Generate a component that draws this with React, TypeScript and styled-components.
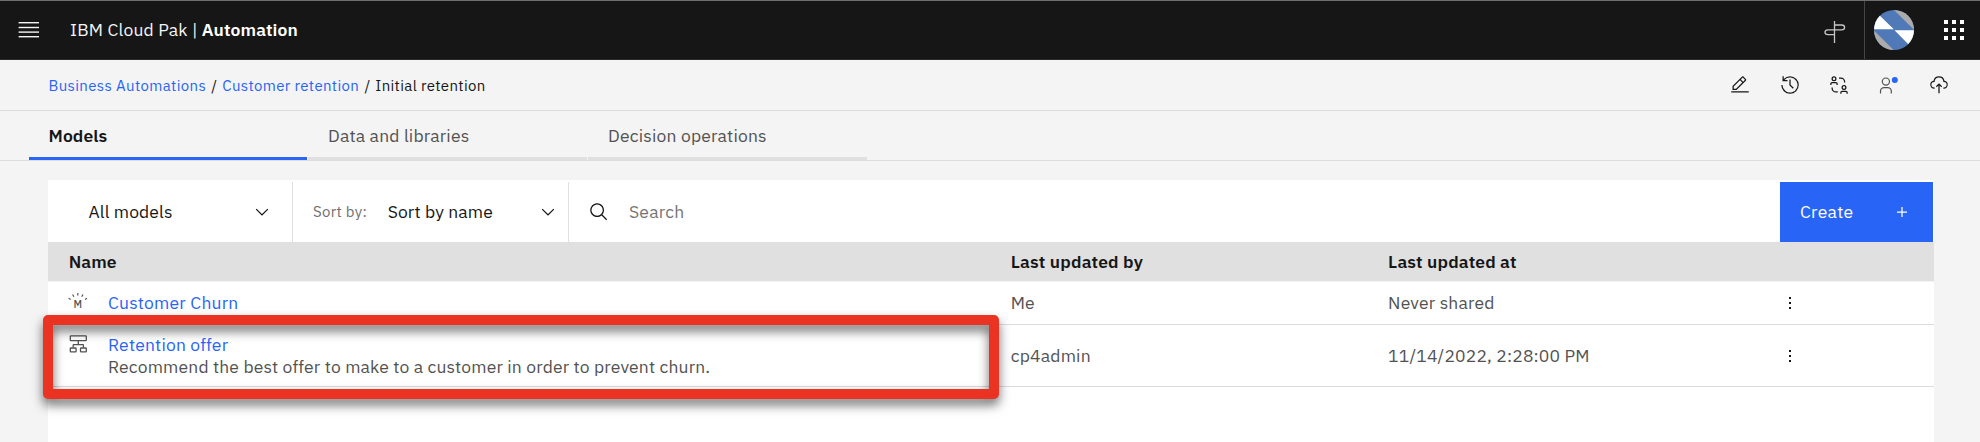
import React from "react";
import styled, { createGlobalStyle } from "styled-components";

const blue = "#2864f5";
const ink = "#161616";
const muted = "#525252";
const line = "#dcdcdc";

const GlobalStyle = createGlobalStyle`
  * { box-sizing: border-box; }
  body {
    margin: 0;
    background: #f4f4f4;
    color: ${ink};
    font-family: "IBM Plex Sans", Roboto, "Liberation Sans", sans-serif;
    font-size: 17.5px;
    line-height: 22.5px;
  }
  svg { display: block; flex: none; }
`;

const Page = styled.div`
  position: relative;
  display: flex;
  flex-direction: column;
  width: 100%;
  height: 442px;
  overflow: hidden;
`;

const Label = styled.span<{ $track?: number }>`
  white-space: pre;
  letter-spacing: ${(p) => p.$track ?? 0.18}px;
`;

const Header = styled.header`
  flex: none;
  display: flex;
  align-items: center;
  height: 60px;
  padding-left: 18px;
  background: #161616;
  border-top: 1px solid #6c6f6e;
  border-bottom: 1px solid #2b2b2b;
  color: #f4f4f4;
`;

const Brand = styled.div`
  display: flex;
  gap: 4px;
  margin-left: 30px;
  padding-top: 1px;
  strong { font-weight: 600; color: #fff; }
`;

const HeaderTools = styled.div`
  display: flex;
  align-items: center;
  height: 100%;
  margin-left: auto;
`;

const Guide = styled.div`
  display: flex;
  align-items: center;
  height: 100%;
  padding: 3px 18.5px 0 0;
  border-right: 1px solid #454545;
`;

const Avatar = styled.div`
  margin: 0 30px 0 9px;
`;

const Switcher = styled.div`
  display: grid;
  grid-template-columns: repeat(3, 4px);
  grid-auto-rows: 4px;
  gap: 4px;
  margin-right: 16px;
  i { background: #fff; }
`;

const CrumbBar = styled.div`
  flex: none;
  display: flex;
  align-items: center;
  justify-content: space-between;
  height: 51px;
  padding: 0 31px 0 48.5px;
  border-bottom: 1px solid ${line};
`;

const Crumbs = styled.nav`
  display: flex;
  gap: 5.2px;
  padding-top: 2.5px;
  font-size: 15px;
`;

const Link = styled.a<{ $track?: number }>`
  color: ${blue};
  white-space: pre;
  letter-spacing: ${(p) => p.$track ?? 0.2}px;
`;

const Actions = styled.div`
  display: flex;
  align-items: center;
  gap: 29.8px;
`;

const TabBar = styled.div`
  flex: none;
  display: flex;
  gap: 1px;
  height: 50px;
  padding-left: 29px;
  border-bottom: 1px solid ${line};
`;

const Tab = styled.div<{ $active?: boolean }>`
  display: flex;
  align-items: center;
  width: ${(p) => (p.$active ? 278 : 279)}px;
  padding: 4px 0 0 ${(p) => (p.$active ? 19.5 : 20)}px;
  border-bottom: 3px solid ${(p) => (p.$active ? blue : "#e0e0e0")};
  color: ${(p) => (p.$active ? ink : muted)};
  font-weight: ${(p) => (p.$active ? 600 : 400)};
`;

const Panel = styled.main`
  flex: 1;
  width: 1886px;
  margin: 19px 0 0 48px;
  background: #fff;
`;

const Toolbar = styled.div`
  display: flex;
  height: 62px;
  padding-top: 2px;
`;

const Dropdown = styled.div<{ $width: number; $indent: number; $end: number }>`
  display: flex;
  align-items: center;
  width: ${(p) => p.$width}px;
  padding: 0 ${(p) => p.$end}px 0 ${(p) => p.$indent}px;
  border-right: 1px solid #e0e0e0;
  > svg { margin-left: auto; }
`;

const Prefix = styled.span`
  margin-right: 20.5px;
  color: #6f6f6f;
  font-size: 15px;
  letter-spacing: 0.27px;
`;

const SearchBox = styled.div`
  flex: 1;
  display: flex;
  align-items: center;
  gap: 20px;
  padding-left: 20px;
  color: #757575;
`;

const CreateButton = styled.button`
  display: flex;
  align-items: center;
  justify-content: space-between;
  width: 153px;
  height: 60px;
  margin-right: 1px;
  padding: 0 21.5px 0 20px;
  border: 0;
  background: ${blue};
  color: #fff;
  font: inherit;
`;

const Columns = styled.div`
  display: grid;
  grid-template-columns: 942px 377.400px 380.600px 1fr;
`;

const TableHead = styled(Columns)`
  align-items: center;
  height: 40px;
  background: #e0e0e0;
  border-bottom: 1px solid #f4f4f4;
  font-weight: 600;
`;

const TableRow = styled(Columns)<{ $height: number }>`
  height: ${(p) => p.$height}px;
  border-bottom: 1px solid ${line};
  color: ${muted};
`;

const Cell = styled.div`
  display: flex;
  align-items: center;
  padding: 1px 0 0 20.7px;
`;

const NameCell = styled.div<{ $top: number; $iconTop: number }>`
  display: flex;
  gap: 20px;
  padding: ${(p) => p.$top}px 0 0 20px;
  > svg { margin-top: ${(p) => p.$iconTop}px; }
`;

const NameText = styled.div`
  display: flex;
  flex-direction: column;
`;

const MenuCell = styled.div`
  display: flex;
  align-items: center;
  padding-left: 41px;
`;

const Kebab = styled.div`
  display: grid;
  gap: 3px;
  width: 2px;
  i { height: 2px; background: ${ink}; }
`;

const Highlight = styled.div`
  position: absolute;
  left: 43px;
  top: 315px;
  width: 956px;
  height: 84px;
  border: 10px solid #ea3323;
  border-radius: 5px;
  filter: drop-shadow(0 6px 5.5px rgba(0, 0, 0, 0.57));
`;

function Glyph({ d, size = 20, box = 32, color = ink }: { d: string; size?: number; box?: number; color?: string }) {
  return (
    <svg width={size} height={size} viewBox={`0 0 ${box} ${box}`} fill={color}>
      <path d={d} />
    </svg>
  );
}

const icons = {
  edit: "M2 26H30V28H2zM25.4 9c.8-.8.8-2 0-2.8l-3.6-3.6c-.8-.8-2-.8-2.8 0l-15 15V24h6.4L25.4 9zM20.4 4L24 7.6l-3 3L17.4 7 20.4 4zM6 22v-3.6l10-10 3.6 3.6-10 10H6z",
  recent:
    "M20.59 22L15 16.41V7h2v8.58l5 5.01L20.59 22zM16,2A13.94,13.94,0,0,0,6,6.23V2H4v8h8V8H7.08A12,12,0,1,1,4,16H2A14,14,0,1,0,16,2Z",
  collaborate:
    "M6 21V20H4v1a7 7 0 007 7h3V26H11A5 5 0 016 21zM24 11v1h2V11a7 7 0 00-7-7H16V6h3A5 5 0 0124 11zM11 11H5a3 3 0 00-3 3v2H4V14a1 1 0 011-1h6a1 1 0 011 1v2h2V14A3 3 0 0011 11zM8 10A4 4 0 104 6 4 4 0 008 10zM8 4A2 2 0 116 6 2 2 0 018 4zM27 25H21a3 3 0 00-3 3v2h2V28a1 1 0 011-1h6a1 1 0 011 1v2h2V28A3 3 0 0027 25zM20 20a4 4 0 104-4A4 4 0 0020 20zm6 0a2 2 0 11-2-2A2 2 0 0126 20z",
  upload:
    "M11 18L12.41 19.41 15 16.83 15 29 17 29 17 16.83 19.59 19.41 21 18 16 13 11 18zM23.5,22H23V20h.5a4.5,4.5,0,0,0,.36-9L23,11l-.1-.82a7,7,0,0,0-13.88,0L9,11,8.14,11a4.5,4.5,0,0,0,.36,9H9v2H8.5A6.5,6.5,0,0,1,7.2,9.14a9,9,0,0,1,17.6,0A6.5,6.5,0,0,1,23.5,22Z",
  search:
    "M29,27.5859l-7.5521-7.5521a11.0177,11.0177,0,1,0-1.4141,1.4141L27.5859,29ZM4,13a9,9,0,1,1,9,9A9.01,9.01,0,0,1,4,13Z",
  chevron: "M8 11L3 6 3.7 5.3 8 9.6 12.3 5.3 13 6z",
  plus: "M17 15L17 8 15 8 15 15 8 15 8 17 15 17 15 24 17 24 17 17 24 17 24 15z",
};

const MenuIcon = () => (
  <svg width="22" height="20" viewBox="0 0 22 20" fill="#f4f4f4">
    <rect x="0.6" y="2" width="20.4" height="1.4" />
    <rect x="0.6" y="6.8" width="20.4" height="1.4" />
    <rect x="0.6" y="11.4" width="20.4" height="1.4" />
    <rect x="0.6" y="16" width="20.4" height="1.4" />
  </svg>
);

const GuideIcon = () => (
  <svg width="22" height="24" viewBox="0 0 22 24" fill="none" stroke="#c6c6c6" strokeWidth="1.3">
    <path d="M10.500 1v22M10.500 5h7.200c1.600 0 2.900 1.100 2.900 2.400s-1.300 2.400-2.900 2.400H3.900C2.300 9.800 1 10.900 1 12.200s1.300 2.400 2.900 2.400h6.600" />
  </svg>
);

const AvatarIcon = () => (
  <svg width="40" height="40" viewBox="0 0 40 40">
    <clipPath id="avatar-disc">
      <circle cx="20" cy="20" r="20" />
    </clipPath>
    <g clipPath="url(#avatar-disc)">
      <rect width="40" height="40" fill="#5079b7" />
      <path d="M0 0L19.800 19.300H0zM20.500 20.200H40V40z" fill="#fff" />
      <path d="M20 0H40V19.800zM0 20.400L19.500 40H0z" fill="#ababab" />
    </g>
  </svg>
);

const UserIcon = () => (
  <svg width="20" height="20" viewBox="0 0 20 20">
    <path
      transform="translate(-2.700 0) scale(0.600)"
      d="M16 6a5 5 0 11-5 5 5 5 0 015-5m0-2a7 7 0 107 7A7 7 0 0016 4zM26 31H24V27a5 5 0 00-5-5H13a5 5 0 00-5 5v4H6V27a7 7 0 017-7h6a7 7 0 017 7z"
      fill="#525252"
    />
    <circle cx="15.800" cy="5" r="3" fill={blue} />
  </svg>
);

const PredictiveIcon = () => (
  <svg width="20" height="20" viewBox="0 0 20 20">
    <path
      d="M9.800 1v2.600M4.600 2.500l1.300 2.200M15 2.500l-1.300 2.200M0.600 6.200l2 1.200M19 6.200l-2 1.200"
      stroke={muted}
      strokeWidth="1.200"
      fill="none"
    />
    <text x="9.800" y="15.500" textAnchor="middle" fontSize="10.500" fontWeight="500" fill={muted}>
      M
    </text>
  </svg>
);

const DecisionIcon = () => (
  <svg width="20" height="20" viewBox="0 0 20 20" fill="none" stroke={muted} strokeWidth="1.300">
    <rect x="2.300" y="1.800" width="16" height="4.800" rx="0.600" />
    <path d="M10.300 6.600v4M5.200 13.500v-2.400q0-.5.5-.5h9.200q.5 0 .5.500v2.400" />
    <rect x="2.300" y="14" width="5.800" height="3.800" rx="0.600" />
    <rect x="12.500" y="14" width="5.800" height="3.800" rx="0.600" />
  </svg>
);

const RowMenu = () => (
  <MenuCell>
    <Kebab>
      <i />
      <i />
      <i />
    </Kebab>
  </MenuCell>
);

export default function App() {
  return (
    <Page>
      <GlobalStyle />
      <Header>
        <MenuIcon />
        <Brand>
          <Label>IBM Cloud Pak |</Label>
          <strong>
            <Label $track={0.1}>Automation</Label>
          </strong>
        </Brand>
        <HeaderTools>
          <Guide>
            <GuideIcon />
          </Guide>
          <Avatar>
            <AvatarIcon />
          </Avatar>
          <Switcher>
            {Array.from({ length: 9 }, (_, i) => (
              <i key={i} />
            ))}
          </Switcher>
        </HeaderTools>
      </Header>

      <CrumbBar>
        <Crumbs>
          <Link $track={0.37}>Business Automations</Link>
          <span>/</span>
          <Link $track={0.35}>Customer retention</Link>
          <span>/</span>
          <Label $track={0.34}>Initial retention</Label>
        </Crumbs>
        <Actions>
          <Glyph d={icons.edit} />
          <Glyph d={icons.recent} />
          <Glyph d={icons.collaborate} />
          <UserIcon />
          <Glyph d={icons.upload} />
        </Actions>
      </CrumbBar>

      <TabBar>
        <Tab $active>
          <Label $track={0.1}>Models</Label>
        </Tab>
        <Tab>
          <Label>Data and libraries</Label>
        </Tab>
        <Tab>
          <Label>Decision operations</Label>
        </Tab>
      </TabBar>

      <Panel>
        <Toolbar>
          <Dropdown $width={245} $indent={40.5} $end={20}>
            <Label $track={0.12}>All models</Label>
            <Glyph d={icons.chevron} box={16} />
          </Dropdown>
          <Dropdown $width={276} $indent={20} $end={10}>
            <Prefix>Sort by:</Prefix>
            <Label $track={0.12}>Sort by name</Label>
            <Glyph d={icons.chevron} box={16} />
          </Dropdown>
          <SearchBox>
            <Glyph d={icons.search} />
            <Label>Search</Label>
          </SearchBox>
          <CreateButton>
            <Label $track={0.25}>Create</Label>
            <Glyph d={icons.plus} color="#fff" />
          </CreateButton>
        </Toolbar>

        <TableHead>
          <Cell>
            <Label $track={0.05}>Name</Label>
          </Cell>
          <Cell>
            <Label>Last updated by</Label>
          </Cell>
          <Cell>
            <Label $track={0.15}>Last updated at</Label>
          </Cell>
        </TableHead>

        <TableRow $height={43}>
          <NameCell $top={9.5} $iconTop={0}>
            <PredictiveIcon />
            <NameText>
              <Link $track={0.2}>Customer Churn</Link>
            </NameText>
          </NameCell>
          <Cell>
            <Label>Me</Label>
          </Cell>
          <Cell>
            <Label>Never shared</Label>
          </Cell>
          <RowMenu />
        </TableRow>

        <TableRow $height={62}>
          <NameCell $top={8.6} $iconTop={0.4}>
            <DecisionIcon />
            <NameText>
              <Link $track={0.18}>Retention offer</Link>
              <Label $track={0.155}>Recommend the best offer to make to a customer in order to prevent churn.</Label>
            </NameText>
          </NameCell>
          <Cell>
            <Label $track={0.2}>cp4admin</Label>
          </Cell>
          <Cell>
            <Label $track={0.16}>11/14/2022, 2:28:00 PM</Label>
          </Cell>
          <RowMenu />
        </TableRow>
      </Panel>

      <Highlight />
    </Page>
  );
}
